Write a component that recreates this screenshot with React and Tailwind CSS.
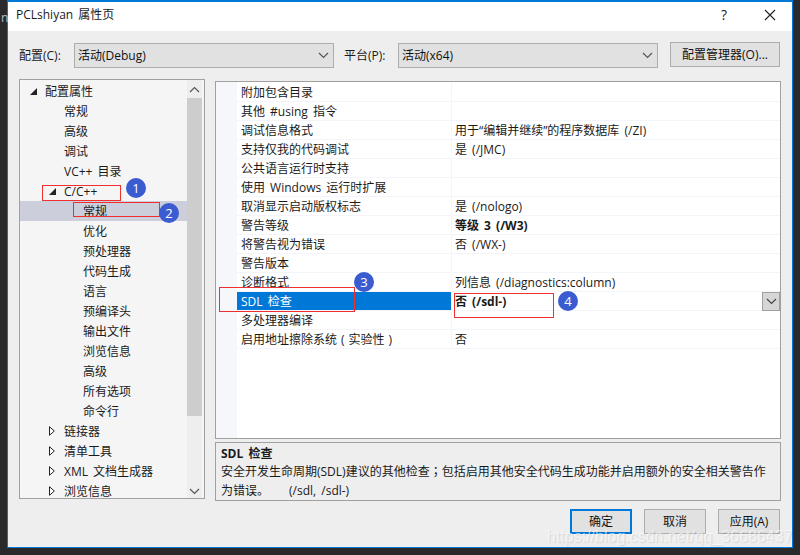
const font = { fontFamily: '"Open Sans", "Noto Sans CJK SC", sans-serif' }

const treeRows = [
    { label: '配置属性', level: 0, arrow: 'open' },
    { label: '常规', level: 1 },
    { label: '高级', level: 1 },
    { label: '调试', level: 1 },
    { label: 'VC++ 目录', level: 1 },
    { label: 'C/C++', level: 1, arrow: 'open' },
    { label: '常规', level: 2, selected: true },
    { label: '优化', level: 2 },
    { label: '预处理器', level: 2 },
    { label: '代码生成', level: 2 },
    { label: '语言', level: 2 },
    { label: '预编译头', level: 2 },
    { label: '输出文件', level: 2 },
    { label: '浏览信息', level: 2 },
    { label: '高级', level: 2 },
    { label: '所有选项', level: 2 },
    { label: '命令行', level: 2 },
    { label: '链接器', level: 1, arrow: 'closed' },
    { label: '清单工具', level: 1, arrow: 'closed' },
    { label: 'XML 文档生成器', level: 1, arrow: 'closed' },
    { label: '浏览信息', level: 1, arrow: 'closed' },
]

const propRows = [
    { name: '附加包含目录', value: '' },
    { name: '其他 #using 指令', value: '' },
    { name: '调试信息格式', value: '用于“编辑并继续”的程序数据库 (/ZI)' },
    { name: '支持仅我的代码调试', value: '是 (/JMC)' },
    { name: '公共语言运行时支持', value: '' },
    { name: '使用 Windows 运行时扩展', value: '' },
    { name: '取消显示启动版权标志', value: '是 (/nologo)' },
    { name: '警告等级', value: '等级 3 (/W3)', bold: true },
    { name: '将警告视为错误', value: '否 (/WX-)' },
    { name: '警告版本', value: '' },
    { name: '诊断格式', value: '列信息 (/diagnostics:column)' },
    { name: 'SDL 检查', value: '否 (/sdl-)', bold: true, selected: true },
    { name: '多处理器编译', value: '' },
    {
        name: (
            <span>
                启用地址擦除系统<span className="mx-[4px]">(</span>实验性<span className="mx-[4px]">)</span>
            </span>
        ),
        value: '否',
    },
]

function Chevron({ className }) {
    return (
        <svg width="11" height="7" viewBox="0 0 11 7" className={className}>
            <path d="M1 1 L5.5 5.5 L10 1" fill="none" stroke="currentColor" strokeWidth="1.2" />
        </svg>
    )
}

function TreeArrow({ type }) {
    if (type === 'open') {
        return (
            <svg width="7" height="7" viewBox="0 0 7 7">
                <polygon points="7,0 7,7 0,7" fill="#222" />
            </svg>
        )
    }
    return (
        <svg width="6" height="10" viewBox="0 0 6 10">
            <polygon points="0.5,0.7 5.3,5 0.5,9.3" fill="#fff" stroke="#222" />
        </svg>
    )
}

function Combo({ text }) {
    return (
        <div className="w-[260px] h-[25px] bg-[#e1e1e1] border border-[#adadad] flex items-center justify-between pl-[3px] pr-[4px] text-[#111]">
            <span>{text}</span>
            <Chevron className="text-[#555]" />
        </div>
    )
}

function Button({ children, primary }) {
    return (
        <div className={`w-[62px] h-[25px] bg-[#e1e1e1] flex items-center justify-center text-[#111] ${primary ? 'border-2 border-[#0078d7]' : 'border border-[#adadad]'}`}>
            {children}
        </div>
    )
}

function TreeRow({ row }) {
    const textLeft = ['pl-[25px]', 'pl-[44px]', 'pl-[63px]'][row.level]
    return (
        <div className={`h-[20px] shrink-0 flex items-center relative pt-[2px] ${row.selected ? 'bg-[#cccedb]' : ''} ${textLeft}`}>
            {row.arrow && (
                <span className={`absolute top-[6px] flex items-center h-[8px] ${row.level === 0 ? 'left-[10px]' : 'left-[29px]'}`}>
                    <TreeArrow type={row.arrow} />
                </span>
            )}
            <span className="whitespace-nowrap">{row.label}</span>
        </div>
    )
}

function PropRow({ row }) {
    return (
        <div className="h-[19px] flex border-b border-[#f4f5fb] relative">
            <div className={`w-[214px] shrink-0 pl-[4px] pt-[2px] flex items-center whitespace-nowrap ${row.selected ? 'bg-[#0078d7] text-white' : ''}`}>
                {row.name}
            </div>
            <div className={`flex-1 pl-[3px] pt-[2px] flex items-center whitespace-nowrap border-l border-[#f4f5fb] ${row.bold ? 'font-bold' : ''}`}>
                {row.value}
            </div>
            {row.selected && (
                <div className="absolute right-0 top-0 w-[18px] h-[19px] bg-[#d6d6d6] border border-[#a0a0a0] flex items-center justify-center text-[#444]">
                    <Chevron />
                </div>
            )}
        </div>
    )
}

function Badge({ n, className }) {
    return (
        <div className={`absolute w-[20px] h-[20px] rounded-full bg-[#3b5bd0] text-white text-[13px] flex items-center justify-center ${className}`}>
            {n}
        </div>
    )
}

export default function App() {
    return (
        <div style={font} className="relative w-[800px] h-[555px] overflow-hidden bg-[#2a2a2c] text-[12px] leading-none text-[#1a1a1a] [word-spacing:2px]">
            <div className="absolute left-[1px] top-[12px] text-[#bbbbbb] text-[12px]">n</div>
            <div className="ml-[7px] w-[786px] h-[548px] border border-t-2 border-[#0078d7] bg-[#eeeeee] flex flex-col">
                <div className="h-[29px] shrink-0 bg-white flex items-center justify-between pl-[8px] pr-[16px] pb-[3px]">
                    <span>PCLshiyan 属性页</span>
                    <div className="flex items-center gap-[37px]">
                        <span className="text-[14px]">?</span>
                        <svg width="12" height="12" viewBox="0 0 12 12">
                            <path d="M1 1 L11 11 M11 1 L1 11" stroke="#222" strokeWidth="1.1" fill="none" />
                        </svg>
                    </div>
                </div>

                <div className="flex items-center h-[25px] mt-[12px] pl-[11px]">
                    <span className="w-[55px]">配置(C):</span>
                    <Combo text="活动(Debug)" />
                    <span className="ml-[10px] w-[54px]">平台(P):</span>
                    <Combo text="活动(x64)" />
                    <div className="ml-[12px] w-[110px] h-[25px] -mt-[2px] bg-[#e1e1e1] border border-[#adadad] flex items-center justify-center text-[#111]">
                        配置管理器(O)...
                    </div>
                </div>

                <div className="flex mt-[11px] pl-[11px]">
                    <div className="w-[186px] h-[420px] border border-[#a0a0a0] bg-[#f5f5f5] flex">
                        <div className="w-[167px] overflow-hidden flex flex-col pt-[1px]">
                            {treeRows.map((row, i) => (
                                <TreeRow key={i} row={row} />
                            ))}
                        </div>
                        <div className="w-[15px] bg-[#eeeeee] flex flex-col items-center">
                            <div className="h-[18px] flex items-center text-[#555]">
                                <Chevron className="rotate-180" />
                            </div>
                            <div className="w-full h-[318px] bg-[#cdcdcd]" />
                            <div className="flex-1 flex items-end pb-[3px] text-[#555]">
                                <Chevron />
                            </div>
                        </div>
                    </div>

                    <div className="ml-[10px] w-[566px] mt-[2px] flex flex-col">
                        <div className="h-[358px] border border-[#a0a0a0] bg-white flex">
                            <div className="w-[21px] shrink-0 bg-[#f5f7fb]" />
                            <div className="flex-1 flex flex-col pt-[1px] min-w-0">
                                {propRows.map((row, i) => (
                                    <PropRow key={i} row={row} />
                                ))}
                            </div>
                        </div>
                        <div className="mt-[3px] h-[59px] border border-[#a0a0a0] pl-[5px] pt-[4px] flex flex-col">
                            <div className="font-bold h-[18px] flex items-center">SDL 检查</div>
                            <div className="leading-[19px] mt-[1px]">
                                <div className="whitespace-nowrap">
                                    安全开发生命周期(SDL)建议的其他检查<span className="font-['Noto_Sans_CJK_TC']">；</span>包括启用其他安全代码生成功能并启用额外的安全相关警告作
                                </div>
                                <div>为错误。<span className="ml-[20px]">(/sdl, /sdl-)</span></div>
                            </div>
                        </div>
                    </div>
                </div>

                <div className="flex justify-end gap-[12px] mt-[8px] pr-[12px]">
                    <Button primary>确定</Button>
                    <Button>取消</Button>
                    <Button>应用(A)</Button>
                </div>
            </div>

            <div className="absolute left-[42px] top-[185px] w-[79px] h-[16px] border border-[#f03030]" />
            <div className="absolute left-[73px] top-[202px] w-[87px] h-[15px] border border-[#f03030]" />
            <div className="absolute left-[219px] top-[287px] w-[136px] h-[25px] border border-[#f03030]" />
            <div className="absolute left-[454px] top-[293px] w-[100px] h-[25px] border border-[#f03030]" />
            <Badge n="1" className="left-[126px] top-[178px]" />
            <Badge n="2" className="left-[159px] top-[203px]" />
            <Badge n="3" className="left-[354px] top-[272px]" />
            <Badge n="4" className="left-[558px] top-[291px]" />

            <div className="absolute left-[547px] top-[528px] font-['Liberation_Sans'] text-[16px] leading-[18px] [word-spacing:0] text-white/60 [text-shadow:1px_1px_1px_rgba(0,0,0,0.1)] whitespace-nowrap">
                https://blog.csdn.net/qq_36686437
            </div>
        </div>
    )
}
